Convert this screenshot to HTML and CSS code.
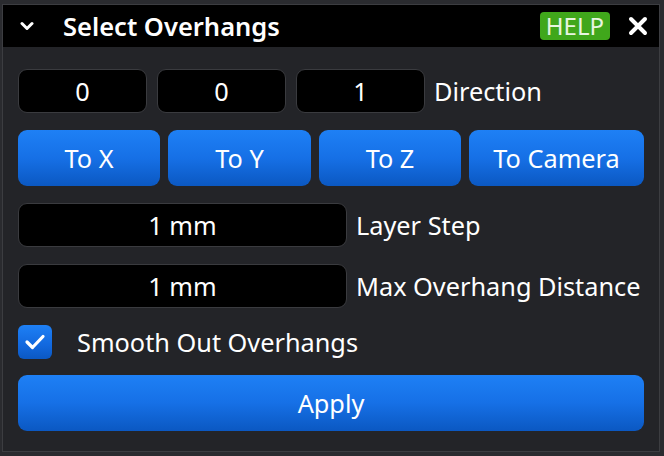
FILE: index.html
```html
<!DOCTYPE html>
<html>
<head>
<meta charset="utf-8">
<link rel="stylesheet" href="styles.css">
</head>
<body>
<div class="panel">
  <div class="header">
    <svg class="chev" width="14" height="10" viewBox="0 0 14 10"><path d="M2 2.5 L7 7.5 L12 2.5" fill="none" stroke="#fff" stroke-width="3" stroke-linecap="round" stroke-linejoin="round"/></svg>
    <div class="title">Select Overhangs</div>
    <div class="help">HELP</div>
    <svg class="close" width="20" height="20" viewBox="0 0 20 20"><path d="M3 3 L17 17 M17 3 L3 17" stroke="#fff" stroke-width="4" stroke-linecap="round"/></svg>
  </div>
  <div class="content">
    <div class="row">
      <div class="field small">0</div>
      <div class="field small">0</div>
      <div class="field small">1</div>
      <div class="label">Direction</div>
    </div>
    <div class="buttons">
      <div class="btn">To X</div>
      <div class="btn">To Y</div>
      <div class="btn">To Z</div>
      <div class="btn">To Camera</div>
    </div>
    <div class="row">
      <div class="field wide">1 mm</div>
      <div class="label">Layer Step</div>
    </div>
    <div class="row">
      <div class="field wide">1 mm</div>
      <div class="label">Max Overhang Distance</div>
    </div>
    <div class="row check-row">
      <div class="checkbox">
        <svg width="22" height="18" viewBox="0 0 22 18"><path d="M3 9 L8.5 14.5 L19 3.5" fill="none" stroke="#fff" stroke-width="3.2" stroke-linecap="round" stroke-linejoin="round"/></svg>
      </div>
      <div class="label check-label">Smooth Out Overhangs</div>
    </div>
    <div class="btn apply">Apply</div>
  </div>
</div>
</body>
</html>
```

FILE: styles.css
```css
html, body {
  margin: 0;
  padding: 0;
  background: #2a2b2f;
  width: 664px;
  height: 456px;
  overflow: hidden;
  font-family: "Noto Sans", "Open Sans", sans-serif;
  color: #ffffff;
}

.panel {
  margin: 4px 0 0 2px;
  width: 656px;
  height: 446px;
  border: 1px solid #3c3d41;
  background: #232428;
  display: flex;
  flex-direction: column;
}

.header {
  height: 42px;
  background: #000;
  display: flex;
  align-items: center;
  padding: 0 10px 0 17px;
}

.title {
  margin-left: 29px;
  font-size: 25.5px;
  font-weight: 600;
  flex: 1;
}

.help {
  background: #40a71b;
  color: #e8f5e0;
  font-size: 24px;
  line-height: 28px;
  height: 28px;
  padding: 0 6px;
  border-radius: 4px;
  margin-right: 18px;
}

.close {
  margin-right: 1px;
}

.content {
  display: flex;
  flex-direction: column;
  gap: 17px;
  padding: 22px 15px 0 15px;
}

.row {
  display: flex;
  align-items: center;
  gap: 10px;
}

.field {
  height: 42px;
  background: #000;
  border: 1px solid #3a3b3f;
  border-radius: 9px;
  display: flex;
  align-items: center;
  justify-content: center;
  font-size: 25.3px;
  box-sizing: content-box;
}

.field.small {
  width: 127px;
}

.field.wide {
  width: 327px;
}

.label {
  font-size: 25.3px;
  white-space: nowrap;
  margin-left: -1px;
}

.buttons {
  display: grid;
  grid-template-columns: 142fr 143fr 142fr 175fr;
  gap: 8px;
}

.btn {
  height: 56px;
  border-radius: 9px;
  background: linear-gradient(to bottom, #1e80f5 0%, #1670e6 50%, #0b58c2 100%);
  display: flex;
  align-items: center;
  justify-content: center;
  font-size: 25.3px;
}

.check-row {
  gap: 25px;
  height: 34px;
}

.checkbox {
  width: 34px;
  height: 34px;
  border-radius: 6px;
  background: linear-gradient(to bottom, #1e80f5 0%, #1268de 60%, #0b58c2 100%);
  display: flex;
  align-items: center;
  justify-content: center;
}

.check-label {
  margin-left: 0;
}

.apply {
  margin-top: -1px;
}
```
